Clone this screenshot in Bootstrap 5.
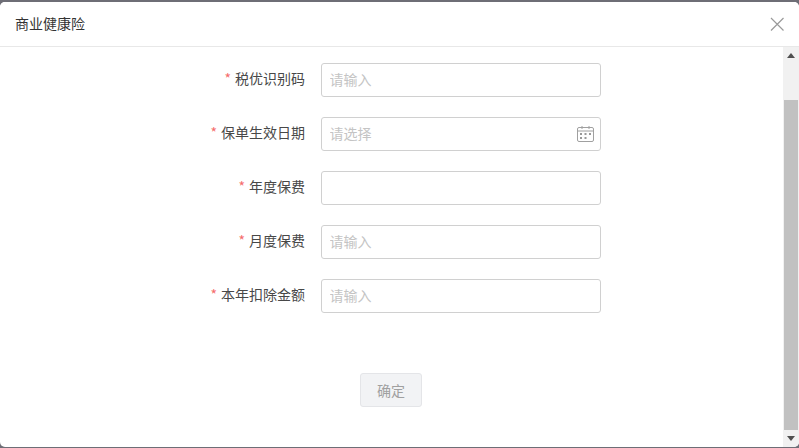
<!DOCTYPE html>
<html lang="zh">
<head>
<meta charset="utf-8">
<title>商业健康险</title>
<link rel="stylesheet" href="https://cdn.jsdelivr.net/npm/bootstrap@5.3.0/dist/css/bootstrap.min.css">
<style>
html,body{height:100%;overflow:hidden}
body{background:#6e6e76;font-family:"Noto Sans CJK SC","Liberation Sans",sans-serif;font-size:14px;color:#333;padding:2px 0 1px}
.dlg{height:445px;border:0;border-radius:5px;overflow:hidden;background:#fff}
.dlg-head{height:45px;padding:0 15px 2px;background:#fff;border-bottom:1px solid #e8e8e8;color:#333;font-size:14px}
.dlg-close{width:16px;height:16px;padding:0;margin-right:-1px;margin-top:2px;border:0;background:none;line-height:0}
.dlg-main{min-height:0}
.dlg-form{padding-top:16px}
.frow{height:34px;margin-bottom:20px}
.flabel{width:305px;text-align:right;color:#484848;line-height:30px;height:34px;margin-right:16px;white-space:nowrap}
.flabel i{font-style:normal;color:#f56c6c;margin-right:4px}
.fbox{width:280px;height:34px;position:relative}
.fbox .form-control{height:34px;border:1px solid #d0d0d0;border-radius:3px;padding:0 8px 2px 7.500px;font-size:14px;line-height:30px;color:#333;box-shadow:none}
.fbox .form-control::placeholder{color:#c4c4c4;opacity:1}
.cal{position:absolute;right:6px;top:8px;width:18px;height:18px}
.okbtn{width:62px;height:34px;margin:40px 1px 0 0;padding:0;background:#f2f3f5;border:1px solid #e4e5e8;border-radius:3px;color:#a0a0a0;font-size:14px;line-height:30px}
.okbtn:disabled{background:#f2f3f5;border-color:#e4e5e8;color:#a0a0a0;opacity:1}
.sbar{width:16px;background:#f1f1f1;padding:0 1px}
.sarrow{height:17px;flex:none}
.sarrow svg{display:block;margin:auto}
.sgap{height:36px;flex:none}
.sthumb{background:#c1c1c1}
</style>
</head>
<body>
<div class="card dlg d-flex flex-column">
  <div class="dlg-head d-flex align-items-center justify-content-between flex-none">
    <span>商业健康险</span>
    <button class="dlg-close" type="button" aria-label="关闭">
      <svg width="16" height="16" viewBox="0 0 16 16"><path d="M2 2 14.500 14.500M14.500 2 2 14.500" stroke="#9a9a9a" stroke-width="1.200" fill="none"/></svg>
    </button>
  </div>
  <div class="dlg-main d-flex flex-grow-1">
    <div class="flex-grow-1 dlg-form">
      <div class="frow d-flex">
        <div class="flabel"><i>*</i>税优识别码</div>
        <div class="fbox"><input class="form-control" placeholder="请输入"></div>
      </div>
      <div class="frow d-flex">
        <div class="flabel"><i>*</i>保单生效日期</div>
        <div class="fbox"><input class="form-control" placeholder="请选择">
          <svg class="cal" viewBox="0 0 18 18"><g fill="none" stroke="#a0a0a0"><rect x="0.500" y="2.500" width="16" height="14" rx="1.500"/><path d="M0.500 6h16M5 1v3M12 1v3"/></g><g fill="#999"><rect x="3" y="8" width="2" height="2"/><rect x="7.500" y="8" width="2" height="2"/><rect x="12" y="8" width="2" height="2"/><rect x="3" y="12" width="2" height="2"/><rect x="7.500" y="12" width="2" height="2"/></g></svg>
        </div>
      </div>
      <div class="frow d-flex">
        <div class="flabel"><i>*</i>年度保费</div>
        <div class="fbox"><input class="form-control"></div>
      </div>
      <div class="frow d-flex">
        <div class="flabel"><i>*</i>月度保费</div>
        <div class="fbox"><input class="form-control" placeholder="请输入"></div>
      </div>
      <div class="frow d-flex">
        <div class="flabel"><i>*</i>本年扣除金额</div>
        <div class="fbox"><input class="form-control" placeholder="请输入"></div>
      </div>
      <div class="d-flex justify-content-center">
        <button class="btn okbtn" type="button" disabled>确定</button>
      </div>
    </div>
    <div class="sbar d-flex flex-column">
      <div class="sarrow d-flex"><svg width="8" height="5" viewBox="0 0 8 5"><path d="M4 0 8 5H0z" fill="#505050"/></svg></div>
      <div class="sgap"></div>
      <div class="sthumb flex-grow-1"></div>
      <div class="sarrow d-flex"><svg width="8" height="5" viewBox="0 0 8 5"><path d="M0 0H8L4 5z" fill="#505050"/></svg></div>
    </div>
  </div>
</div>
</body>
</html>
